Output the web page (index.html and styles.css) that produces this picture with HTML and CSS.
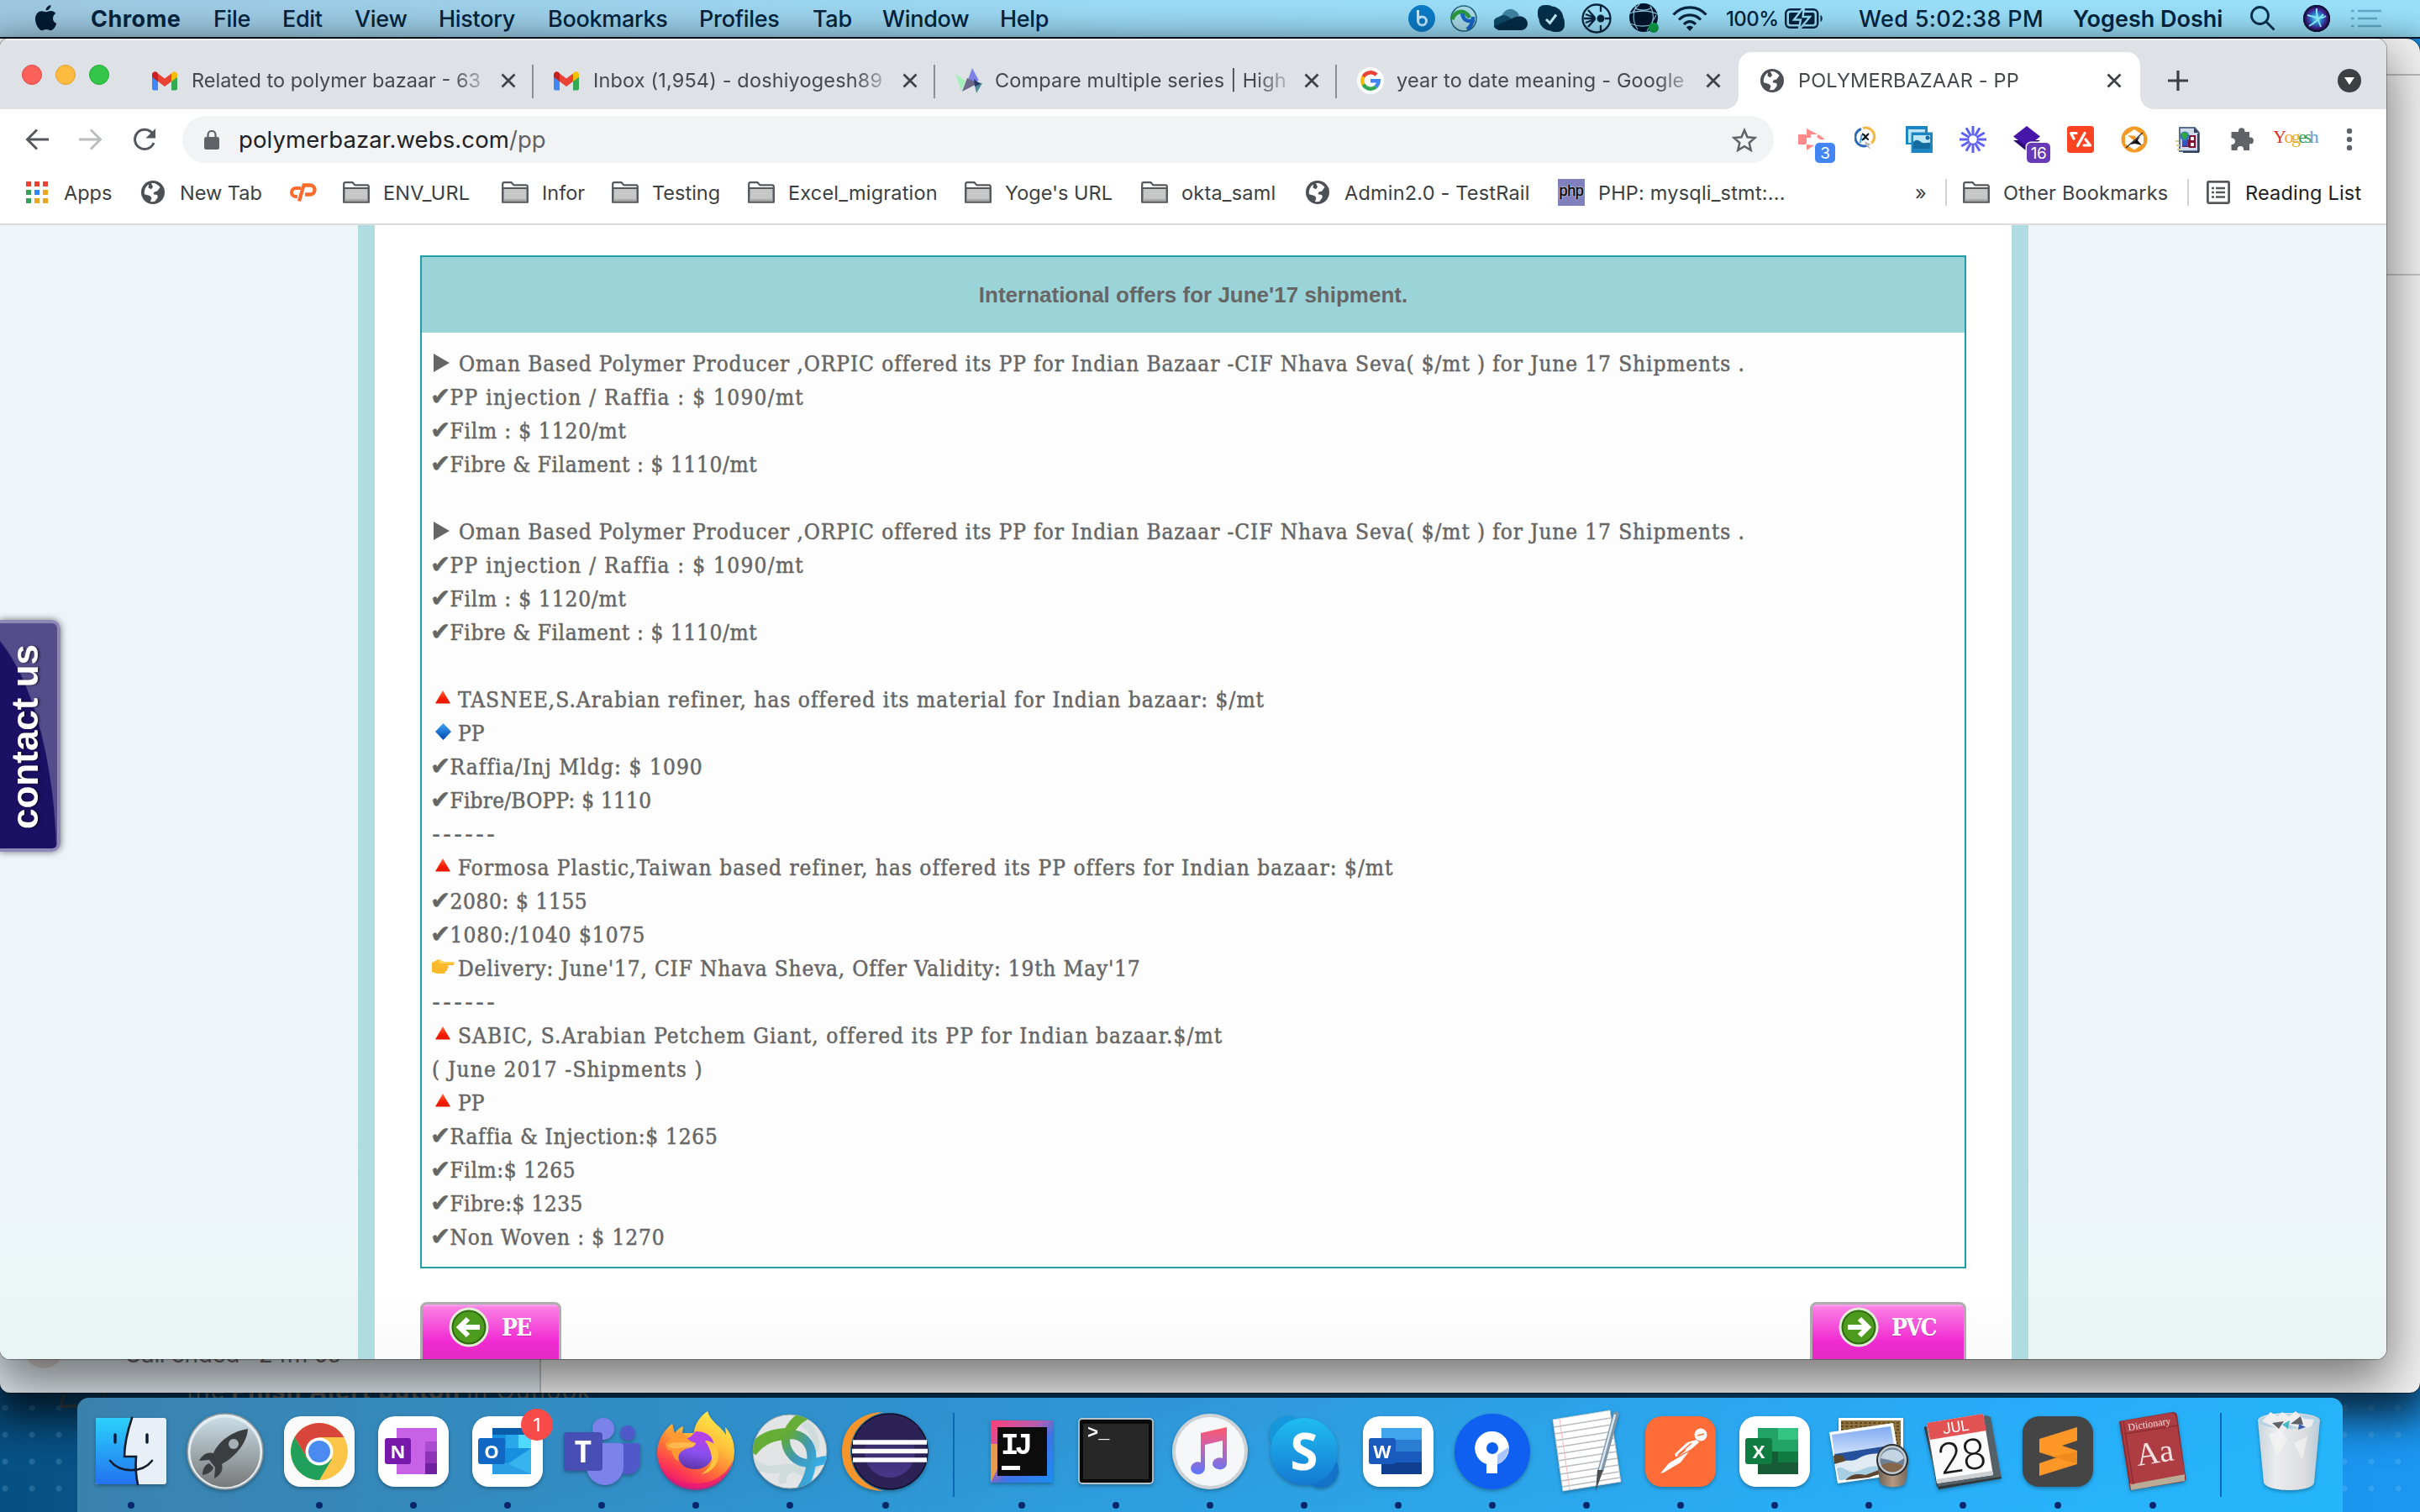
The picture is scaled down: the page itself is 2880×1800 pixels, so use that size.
FILE: index.html
```html
<!DOCTYPE html>
<html lang="en">
<head>
<meta charset="utf-8">
<title>POLYMERBAZAAR - PP</title>
<link rel="stylesheet" href="styles.css">
</head>
<body>
<svg class="defs" aria-hidden="true">
  <defs>
    <symbol id="folder" viewBox="0 0 32 26"><path d="M1.2 24.5V3.2C1.2 2 2 1.2 3 1.2h8.5l3 3.2H29c1 0 1.8.8 1.8 1.8v18.3z" fill="#fff" stroke="#55585c" stroke-width="2.2"/><path d="M1.5 8h29v16.6h-29z" fill="#c7c7c7" stroke="#55585c" stroke-width="2"/><path d="M2.5 21h27v2.6h-27z" fill="#aaa"/></symbol>
    <symbol id="globe" viewBox="0 0 28 28"><circle cx="14" cy="14" r="14" fill="#4d5156"/><path d="M12 3.2c4-.8 8.500 1.400 10.500 4.800l-3.300 4.500-3.700 1-1 2.700 4.700.8.6 3-3.500 4.800c-2 .6-3.500.6-5.300.2l1.500-4.500-2.200-2.500-6.300-1.800C3 12 5.500 6.500 9 4.500l-.5 4 3.500 1.700 2-2.700z" fill="#fff"/></symbol>
    <symbol id="close" viewBox="0 0 18 18"><path d="M1.500 1.500l15 15M16.500 1.500l-15 15" stroke="#3f4246" stroke-width="2.800" fill="none"/></symbol>
    <symbol id="gmail" viewBox="0 0 30 23"><path d="M0 3v17.500A2 2 0 0 0 2 22.500h5V9z" fill="#4285f4"/><path d="M30 3v17.500a2 2 0 0 1-2 2h-5V9z" fill="#34a853"/><path d="M23 2.500V12l7-5.300V3.500C30 .5 26.500-.8 24.200.9z" fill="#fbbc04"/><path d="M7 12V2.500l8 6 8-6V12l-8 6z" fill="#ea4335"/><path d="M0 3.500v3.200L7 12V2.500L5.800.9C3.500-.8 0 .5 0 3.500z" fill="#c5221f"/></symbol>
    <linearGradient id="gRed" x1="0" y1="0" x2="0" y2="1"><stop offset="0" stop-color="#ff6a4a"/><stop offset=".6" stop-color="#f81c00"/><stop offset="1" stop-color="#e01800"/></linearGradient>
    <linearGradient id="gBlue" x1="0" y1="0" x2="0" y2="1"><stop offset="0" stop-color="#3fa4f5"/><stop offset="1" stop-color="#0048b0"/></linearGradient>
    <linearGradient id="gFinder" x1="0" y1="0" x2="0" y2="1"><stop offset="0" stop-color="#2bd2fb"/><stop offset="1" stop-color="#2272f0"/></linearGradient>
    <linearGradient id="gSilver" x1="0" y1="0" x2="0" y2="1"><stop offset="0" stop-color="#c9dde6"/><stop offset="1" stop-color="#787878"/></linearGradient>
    <linearGradient id="gFox" x1=".8" y1="0" x2=".25" y2="1"><stop offset="0" stop-color="#fff14d"/><stop offset=".35" stop-color="#ffc03a"/><stop offset=".6" stop-color="#ff7a35"/><stop offset=".8" stop-color="#ff3d50"/><stop offset="1" stop-color="#e3107a"/></linearGradient>
    <linearGradient id="gFoxBall" x1=".6" y1="0" x2=".4" y2="1"><stop offset="0" stop-color="#bb3fe6"/><stop offset=".5" stop-color="#8a50f0"/><stop offset="1" stop-color="#5f36a8"/></linearGradient>
    <linearGradient id="gLink" x1="0" y1="0" x2="1" y2="1"><stop offset="0" stop-color="#62aa35"/><stop offset=".55" stop-color="#3f98b8"/><stop offset="1" stop-color="#33b4f2"/></linearGradient>
    <linearGradient id="gLens" x1="0" y1="0" x2="0" y2="1"><stop offset="0" stop-color="#2f2560"/><stop offset="1" stop-color="#473889"/></linearGradient>
    <linearGradient id="gNote" x1="0" y1="0" x2="0" y2="1"><stop offset="0" stop-color="#ff5768"/><stop offset=".35" stop-color="#d361a8"/><stop offset="1" stop-color="#5a78fa"/></linearGradient>
    <linearGradient id="gSkype" x1="0" y1="0" x2="0" y2="1"><stop offset="0" stop-color="#1fbdf0"/><stop offset="1" stop-color="#1579d3"/></linearGradient>
    <linearGradient id="gIJ" x1="0" y1="0" x2="1" y2="1"><stop offset="0" stop-color="#ff3f78"/><stop offset=".4" stop-color="#b65cae"/><stop offset=".6" stop-color="#3f73e6"/><stop offset="1" stop-color="#1b8df5"/></linearGradient>
    <linearGradient id="gSky" x1="0" y1="0" x2="0" y2="1"><stop offset="0" stop-color="#7faaf3"/><stop offset="1" stop-color="#cfe0fb"/></linearGradient>
    <linearGradient id="gBarrel" x1="0" y1="0" x2="1" y2="0"><stop offset="0" stop-color="#6b5d52"/><stop offset=".5" stop-color="#b59a84"/><stop offset="1" stop-color="#76665a"/></linearGradient>
    <linearGradient id="gBin" x1="0" y1="0" x2="1" y2="0"><stop offset="0" stop-color="#c9d6dd"/><stop offset=".3" stop-color="#ececee"/><stop offset=".75" stop-color="#dcdddf"/><stop offset="1" stop-color="#b7cbd8"/></linearGradient>
    <radialGradient id="gSiri"><stop offset="0" stop-color="#7fe9ff"/><stop offset=".4" stop-color="#2a86d8"/><stop offset=".75" stop-color="#43218f"/><stop offset="1" stop-color="#0d1238"/></radialGradient>
    <clipPath id="ball"><circle r="44"/></clipPath>
    <clipPath id="net"><circle cx="18" cy="17" r="17"/></clipPath>
  </defs>
</svg>

<header class="menubar">
  <nav class="menus">
    <svg width="28" height="32" viewBox="0 0 28 32"><path d="M19.500 0c.3 3-2.600 6.600-5.900 6.500C13.200 3.500 16.400.3 19.500 0zM14 8.200c1.200 0 3-1.300 5.500-1.200 2.400.1 4.500 1.200 5.800 3.100-5 3.200-4.100 10 1 12-1 3-3.800 8.200-6.900 8.200-2 0-2.800-1.200-5.200-1.200S10.900 30.300 9 30.300C5.400 30.300 1 22.800 1 16.800c0-6.200 3.900-9.500 7.600-9.500 2.300 0 4.100.9 5.400.9z" fill="#001c33"/></svg>
    <b>Chrome</b><span>File</span><span>Edit</span><span>View</span><span>History</span><span>Bookmarks</span><span>Profiles</span><span>Tab</span><span>Window</span><span>Help</span>
  </nav>
  <div class="status">
    <svg width="32" height="32" viewBox="0 0 32 32"><circle cx="16" cy="16" r="16" fill="#0b7cc8"/><path d="M11.500 6v13a5 5 0 1 0 5-5c-2.500 0-4.500 1.500-5 4" fill="none" stroke="#bfeaff" stroke-width="3"/></svg>
    <svg width="32" height="32" viewBox="0 0 32 32"><circle cx="16" cy="16" r="15" fill="#a9dbe8" stroke="#23607b" stroke-width="1.500"/><path d="M2 17C6 7 16 4 23 15" fill="none" stroke="#2b9a3f" stroke-width="5"/><path d="M14 10c2 10 8 10 15 8M27 14c0 7-3 12-7 15" fill="none" stroke="#1766c8" stroke-width="4.500"/></svg>
    <svg width="40" height="27" viewBox="0 0 40 27"><path d="M9 12C10 3 22-4 30 9l-9 7z" fill="#3f84a4"/><path d="M8 27A8 8 0 0 1 6 11c6-4 11-1 15 3l13 11c-1 1-2 2-4 2z" fill="#0d4a68"/><path d="M8 27c-3 0-6-2-7-5l25-11c8-3 14 3 14 8 0 4-3 8-8 8z" fill="#042d47"/></svg>
    <svg width="32" height="32" viewBox="0 0 32 32"><circle cx="16" cy="16" r="14.500" fill="#03304b"/><rect width="20" height="20" rx="8" fill="#03304b"/><rect x="12" y="12" width="20" height="20" rx="8" fill="#03304b"/><path d="M10 17l4.500 4.500L22 11.500" fill="none" stroke="#c9f0ff" stroke-width="3"/></svg>
    <svg width="36" height="36" viewBox="0 0 36 36"><g fill="none" stroke="#03263d" stroke-width="2.300"><circle cx="18" cy="18" r="16.500"/><path d="M23 2v8M23 26v8M28 18h6M3 18h14M8 8l8 9M8 28l8-9M5 13l11 4M5 23l11-4"/></g><circle cx="23" cy="18" r="4.500" fill="#03263d"/></svg>
    <svg width="36" height="36" viewBox="0 0 36 36"><circle cx="18" cy="17" r="17" fill="#00152c"/><g clip-path="url(#net)" fill="none" stroke="#8fcfe8" stroke-width="1.100"><path d="M9 3c-4 9-4 19 2 28M26 3c5 9 4 19-1 28M1 12c10-4 24-4 34 1M2 24c9 4 20 4 30 0M8 6c6 3 14 3 20-1M14 0L5 10M22 33L33 14"/></g><circle cx="30" cy="29" r="6" fill="#0aa04a"/></svg>
    <svg width="42" height="30" viewBox="0 0 42 30"><g fill="none" stroke="#00253f" stroke-width="3.200"><path d="M1.500 10.500C12-1 30-1 40.500 10.500M8 16.500c7-7.500 19-7.500 26 0M14 22c4-4.500 10-4.500 14 0"/></g><path d="M17 25.500c2-2.500 6-2.500 8 0L21 30z" fill="#00253f"/></svg>
    <span class="percent">100%</span>
    <svg width="46" height="26" viewBox="0 0 46 26"><rect x="1.200" y="2.200" width="38" height="21.600" rx="5" fill="none" stroke="#00253f" stroke-width="2.400"/><rect x="5" y="6" width="30.500" height="14" rx="2" fill="#00253f"/><path d="M23-1L11 14.500h8L16.500 27 30 11h-8.500z" fill="#00253f" stroke="#9be0fa" stroke-width="2.400"/><path d="M42.500 9c3 1 3 7 0 8z" fill="#00253f"/></svg>
    <span class="clock">Wed 5:02:38 PM</span>
    <span class="user">Yogesh Doshi</span>
    <svg width="30" height="30" viewBox="0 0 30 30"><g fill="none" stroke="#00304c" stroke-width="2.800"><circle cx="11.500" cy="11.500" r="10"/><path d="M18.500 18.500L28.500 28.500"/></g></svg>
    <svg width="32" height="32" viewBox="0 0 32 32"><circle cx="16" cy="16" r="15.500" fill="url(#gSiri)" stroke="#0b1030" stroke-width="1.500"/><path d="M5 12c8 2 16 6 22 1M16 4c-1 9 2 14 5 22M7 25c5-3 12-8 17-14" stroke="#8df3ff" stroke-width="2" fill="none"/></svg>
    <svg width="36" height="22" viewBox="0 0 36 22"><g stroke="#5cacca" stroke-width="2.600"><path d="M0 2h3.500M8 2h28M0 11h3.500M8 11h23M0 20h3.500M8 20h28"/></g></svg>
  </div>
</header>

<div class="back-note"><svg width="60" height="40" viewBox="0 0 60 40"><path d="M4 22L0 36h56M52 20v10" fill="none" stroke="#4b5358" stroke-width="3"/></svg>the <b>Phish Alert button</b> in Outlook</div>
<div class="back-window">
  <div class="back-bar"></div>
  <div class="back-tools"></div>
  <div class="back-body"><div class="back-list"><i></i><span>Call ended · 24m 0s</span></div></div>
</div>

<main class="window">
  <div class="tabstrip">
    <div class="lights"><i class="red"></i><i class="amber"></i><i class="green"></i></div>
    <div class="tab"><svg width="30" height="23"><use href="#gmail"/></svg><span>Related to polymer bazaar - 63</span><svg class="x" width="18" height="18"><use href="#close"/></svg></div>
    <div class="tab"><svg width="30" height="23"><use href="#gmail"/></svg><span class="roomy">Inbox (1,954) - doshiyogesh89</span><svg class="x" width="18" height="18"><use href="#close"/></svg></div>
    <div class="tab"><svg width="32" height="30" viewBox="0 0 32 30"><path d="M0 7l12 8-5 12z" fill="#a4efb9"/><path d="M20 0l8 15-14 2z" fill="#7d83e6"/><path d="M32 18l-7 12-3-14z" fill="#4e8a98"/><path d="M14 12l13 6-19 10z" fill="#6c6a86"/><path d="M22 13l8 6-7 3z" fill="#283a67"/></svg><span class="roomy">Compare multiple series | High</span><svg class="x" width="18" height="18"><use href="#close"/></svg></div>
    <div class="tab last"><svg width="32" height="32" viewBox="0 0 32 32"><circle cx="16" cy="16" r="16" fill="#fff"/><g fill="none" stroke-width="4.500"><path d="M7.500 11.500A9.700 9.700 0 0 1 23 9.300" stroke="#ea4335"/><path d="M7.600 20.700a9.700 9.700 0 0 1 0-9.400" stroke="#fbbc05"/><path d="M22.500 23.200a9.700 9.700 0 0 1-15-2.700" stroke="#34a853"/><path d="M16 16.300h9.700a9.700 9.700 0 0 1-3.300 7" stroke="#4285f4"/></g></svg><span class="roomy">year to date meaning - Google</span><svg class="x" width="18" height="18"><use href="#close"/></svg></div>
    <div class="tab active"><svg width="28" height="28"><use href="#globe"/></svg><span>POLYMERBAZAAR - PP</span><svg class="x" width="18" height="18"><use href="#close"/></svg></div>
    <svg class="plus" width="24" height="24" viewBox="0 0 24 24"><path d="M12 0v24M0 12h24" stroke="#3c4043" stroke-width="3.200"/></svg>
    <svg class="more" width="28" height="28" viewBox="0 0 28 28"><circle cx="14" cy="14" r="14" fill="#3c4043"/><path d="M8 10h12l-6 9z" fill="#fff"/></svg>
  </div>

  <div class="toolbar">
    <svg class="nav" width="28" height="26" viewBox="0 0 28 26"><path d="M28 13H2.500M14 1.500L2.500 13 14 24.500" fill="none" stroke="#54575c" stroke-width="2.900"/></svg>
    <svg class="nav" width="28" height="26" viewBox="0 0 28 26"><path d="M0 13h25M14 1.500L25.500 13 14 24.500" fill="none" stroke="#babcbe" stroke-width="2.900"/></svg>
    <svg class="nav" width="28" height="28" viewBox="0 0 28 28"><path d="M23.500 7A11.600 11.600 0 1 0 25 18" fill="none" stroke="#54575c" stroke-width="3"/><path d="M27 1v11.500H15.500z" fill="#54575c"/></svg>
    <div class="omnibox">
      <svg width="18" height="23" viewBox="0 0 18 23"><rect y="8" width="18" height="15" rx="2.500" fill="#5f6368"/><path d="M4.500 9V5.500a4.500 4.500 0 0 1 9 0V9" fill="none" stroke="#5f6368" stroke-width="2.200"/></svg>
      <span>polymerbazar.webs.com<em>/pp</em></span>
      <svg width="30" height="29" viewBox="0 0 30 29"><path d="M15 3l3.500 8.300 9 .8-6.800 5.900 2 8.800L15 22.200l-7.700 4.600 2-8.800L2.500 12.100l9-.8z" fill="none" stroke="#5f6368" stroke-width="2.500"/></svg>
    </div>
    <div class="extensions">
      <div class="ext"><svg width="32" height="32" viewBox="0 0 32 32"><path d="M0 10h9v12H0zM10 3l13 7H10zM10 22l9 1-9 6zM24 10l8 6h-6l-4-3zM10 10h5v4h-5z" fill="#ff8a8a"/><path d="M9.500 11v10" stroke="#ff8a8a" stroke-width="1"/></svg><span class="badge blue">3</span></div>
      <div class="ext"><svg class="pxicon" width="26" height="30" viewBox="0 0 26 30"><circle cx="12.500" cy="13" r="10.500" fill="#fff"/><path d="M8 3.500a10.500 10.500 0 1 0 7.500 19.600" fill="none" stroke="#2f6cb8" stroke-width="3"/><path d="M10 2.500A10.500 10.500 0 0 1 20 20.500" fill="none" stroke="#f5b845" stroke-width="3.200"/><text x="6" y="17" font-family="Liberation Sans" font-style="italic" font-weight="700" font-size="13" fill="#37a0d8">p</text><path d="M9 9.500c3-1 5 7 8 6.500M17 9l-8 8" stroke="#111" stroke-width="2" fill="none"/><path d="M12 18l8 4-3 1 2 5-5-4z" fill="#b9b9b9"/></svg></div>
      <div class="ext"><svg width="32" height="32" viewBox="0 0 32 32"><path d="M0 0h26v22H0z" fill="#1a86c4"/><path d="M3 4h20v16H3z" fill="#c4e4f3"/><path d="M6.500 7.500H32V32H6.500z" fill="#1b86c2"/><path d="M9 11h20v14H9z" fill="#bfe7f8"/><path d="M9 19c5-5 8 0 11 1s6-1 9 0v7H9z" fill="#136ba0"/><circle cx="26" cy="14" r="2.500" fill="#136ba0"/></svg></div>
      <div class="ext"><svg width="32" height="32" viewBox="-16 -16 32 32"><g stroke="#5f61f2" stroke-width="3"><path d="M0-16V16M-16 0H16M-8-13.800L8 13.800M8-13.800L-8 13.800M-13.800-8L13.800 8M13.800-8L-13.800 8"/></g><circle r="4.800" fill="#fff"/></svg></div>
      <div class="ext"><svg width="32" height="32" viewBox="0 0 32 32"><path d="M0 17h32L16 30z" fill="#2a0a70"/><path d="M16 0l16 12.500L16 25 0 12.500z" fill="#4716a8"/></svg><span class="badge violet">16</span></div>
      <div class="ext"><svg width="32" height="32" viewBox="0 0 32 32"><rect width="32" height="32" rx="3.500" fill="#fd4422"/><path d="M11 8.500H4.500L8 15M21 8.500l-8.500 15M22 16l5.500 7H20" fill="none" stroke="#fff" stroke-width="3.200" stroke-linejoin="round" stroke-linecap="round"/></svg></div>
      <div class="ext"><svg width="32" height="32" viewBox="0 0 32 32"><circle cx="16" cy="16" r="15.500" fill="#f49a26"/><path d="M16 4l11 7.500v9L16 28.500 5 21v-9.500z" fill="#fff"/><path d="M8 11l10 1-2 6z" fill="#f49a26"/><path d="M23 12L11 22l6-1 8 2-5-6z" fill="#111"/><path d="M26 8L6 26" stroke="#222" stroke-width="1.200"/></svg></div>
      <div class="ext"><svg width="30" height="32" viewBox="0 0 30 32"><path d="M5 2h18l5 6v22H5z" fill="#cfdaea" stroke="#5b6f90" stroke-width="2"/><path d="M22 2v6h6z" fill="#33415c"/><path d="M27 9v22H9" stroke="#32415e" stroke-width="2" fill="none"/><path d="M9 17h6v7H9zM17 12h6v6h-6zM17 19h6v6h-6z" fill="#fff" stroke="#7d1434" stroke-width="2.200"/><path d="M8 17h7v7H8z" fill="#3452c0"/><circle cx="11" cy="12" r="5.500" fill="#2f78c8"/><path d="M7 9c3-3 6-2 8 1l-3 6-4-2z" fill="#32a53a"/><path d="M0 18h4M1 23h4M2 28h4" stroke="#d9cf8a" stroke-width="2"/></svg></div>
      <div class="ext"><svg width="30" height="30" viewBox="0 0 30 30"><path d="M11 5a3.700 3.700 0 0 1 7.400 0v1H24v6.500h1a3.900 3.900 0 0 1 0 7.800h-1V28h-7v-1.200a3.700 3.700 0 0 0-7.400 0V28H2.500v-7h1.300a3.800 3.800 0 0 0 0-7.500H2.500V6H11z" fill="#5f6368"/></svg></div>
      <div class="ext avatar"><span class="r">Y</span><span class="y">o</span><span class="o">g</span><span class="g">e</span><span class="g">s</span><span class="b">h</span></div>
      <div class="ext"><svg width="8" height="28" viewBox="0 0 8 28"><g fill="#5f6368"><circle cx="4" cy="4" r="3.200"/><circle cx="4" cy="14" r="3.200"/><circle cx="4" cy="24" r="3.200"/></g></svg></div>
    </div>
  </div>

  <div class="bookmarks">
    <div class="bm"><svg width="26" height="26" viewBox="0 0 26 26"><path d="M0 0h6v6H0zM10 0h6v6h-6zM20 0h6v6h-6z" fill="#ea4335"/><path d="M0 10h6v6H0zM0 20h6v6H0z" fill="#34a05a"/><path d="M10 10h6v6h-6z" fill="#2d86f5"/><path d="M20 10h6v6h-6zM10 20h6v6h-6zM20 20h6v6h-6z" fill="#eba51f"/></svg><span class="wide">Apps</span></div>
    <div class="bm"><svg width="28" height="28"><use href="#globe"/></svg><span class="mid">New Tab</span></div>
    <div class="bm"><svg width="33" height="23" viewBox="0 0 33 23"><path d="M14 6H8a5 5 0 0 0 0 10h2" fill="none" stroke="#ff6c2c" stroke-width="4"/><path d="M12 21.500L17.500 2.500H25a5.500 5.500 0 0 1 0 11h-6" fill="none" stroke="#ff6c2c" stroke-width="4.300"/></svg></div>
    <div class="bm"><svg width="32" height="26"><use href="#folder"/></svg><span class="loose">ENV_URL</span></div>
    <div class="bm"><svg width="32" height="26"><use href="#folder"/></svg><span>Infor</span></div>
    <div class="bm"><svg width="32" height="26"><use href="#folder"/></svg><span>Testing</span></div>
    <div class="bm"><svg width="32" height="26"><use href="#folder"/></svg><span class="loose">Excel_migration</span></div>
    <div class="bm"><svg width="32" height="26"><use href="#folder"/></svg><span>Yoge's URL</span></div>
    <div class="bm"><svg width="32" height="26"><use href="#folder"/></svg><span class="loose">okta_saml</span></div>
    <div class="bm"><svg width="28" height="28"><use href="#globe"/></svg><span class="mid loose">Admin2.0 - TestRail</span></div>
    <div class="bm"><div class="php">php</div><span class="loose">PHP: mysqli_stmt:...</span></div>
    <div class="bm chevrons">»</div>
    <div class="bm rule"></div>
    <div class="bm"><svg width="32" height="26"><use href="#folder"/></svg><span class="loose">Other Bookmarks</span></div>
    <div class="bm rule"></div>
    <div class="bm reading"><svg width="28" height="28" viewBox="0 0 28 28"><rect x="1.400" y="1.400" width="25.200" height="25.200" rx="1" fill="#fff" stroke="#55595e" stroke-width="2.800"/><path d="M6 9h3M11 9h11M6 14h3M11 14h11M6 19.500h3M11 19.500h11" stroke="#55595e" stroke-width="2.600"/></svg><span class="mid loose">Reading List</span></div>
  </div>

  <div class="page">
    <div class="column">
      <section class="offers">
        <h2>International offers for June'17 shipment.</h2>
        <div class="lines">
          <p class="s9"><svg class="play" viewBox="0 0 19 22"><path d="M0 0l19 11L0 22z" fill="#666"/></svg>Oman Based Polymer Producer ,ORPIC offered its PP for Indian Bazaar -CIF Nhava Seva( $/mt ) for June 17 Shipments .</p>
          <p class="s13"><i>✔</i>PP injection / Raffia : $ 1090/mt</p>
          <p class="s8"><i>✔</i>Film : $ 1120/mt</p>
          <p class="s6"><i>✔</i>Fibre &amp; Filament : $ 1110/mt</p>
          <p>&nbsp;</p>
          <p class="s9"><svg class="play" viewBox="0 0 19 22"><path d="M0 0l19 11L0 22z" fill="#666"/></svg>Oman Based Polymer Producer ,ORPIC offered its PP for Indian Bazaar -CIF Nhava Seva( $/mt ) for June 17 Shipments .</p>
          <p class="s13"><i>✔</i>PP injection / Raffia : $ 1090/mt</p>
          <p class="s8"><i>✔</i>Film : $ 1120/mt</p>
          <p class="s6"><i>✔</i>Fibre &amp; Filament : $ 1110/mt</p>
          <p>&nbsp;</p>
          <p class="s10"><svg class="emoji" viewBox="0 0 31 20"><path d="M13 1l9 15.500H4z" fill="url(#gRed)"/></svg>TASNEE,S.Arabian refiner, has offered its material for Indian bazaar: $/mt</p>
          <p><svg class="emoji" viewBox="0 0 31 20"><path d="M13.500 0l9.500 10-9.500 10L4 10z" fill="url(#gBlue)"/></svg>PP</p>
          <p class="s11"><i>✔</i>Raffia/Inj Mldg: $ 1090</p>
          <p class="s2"><i>✔</i>Fibre/BOPP: $ 1110</p>
          <p class="dash">------</p>
          <p class="s10"><svg class="emoji" viewBox="0 0 31 20"><path d="M13 1l9 15.500H4z" fill="url(#gRed)"/></svg>Formosa Plastic,Taiwan based refiner, has offered its PP offers for Indian bazaar: $/mt</p>
          <p class="s6"><i>✔</i>2080: $ 1155</p>
          <p class="s10"><i>✔</i>1080:/1040 $1075</p>
          <p class="s8"><svg class="emoji" viewBox="0 0 31 20"><path d="M0 5l8-4 6 3h11c2 0 2 4 0 4h-7c3 1 2 4 0 4 1 2 0 3-2 3.500 0 2-1 2.500-3 2.500H6l-6-2z" fill="#fbb92b"/><path d="M8 1l6 3h11c1 0 1.500 1 1.500 1.700L9 6z" fill="#ffd35c"/></svg>Delivery: June'17, CIF Nhava Sheva, Offer Validity: 19th May'17</p>
          <p class="dash">------</p>
          <p class="s11"><svg class="emoji" viewBox="0 0 31 20"><path d="M13 1l9 15.500H4z" fill="url(#gRed)"/></svg>SABIC, S.Arabian Petchem Giant, offered its PP for Indian bazaar.$/mt</p>
          <p class="s12">( June 2017 -Shipments )</p>
          <p><svg class="emoji" viewBox="0 0 31 20"><path d="M13 1l9 15.500H4z" fill="url(#gRed)"/></svg>PP</p>
          <p class="s7"><i>✔</i>Raffia &amp; Injection:$ 1265</p>
          <p class="s6"><i>✔</i>Film:$ 1265</p>
          <p class="s4"><i>✔</i>Fibre:$ 1235</p>
          <p class="s9"><i>✔</i>Non Woven : $ 1270</p>
        </div>
      </section>
      <div class="pager">
        <a class="pink pe"><svg width="48" height="48" viewBox="-24 -24 48 48"><circle r="23.500" fill="#dfeed5"/><circle r="19.500" fill="#4c9a1e" stroke="#2f6a10" stroke-width="2"/><path d="M13 0H-8M-1-10L-11 0-1 10" fill="none" stroke="#fff" stroke-width="6"/></svg><span>PE</span></a>
        <a class="pink pvc"><svg width="48" height="48" viewBox="-24 -24 48 48"><circle r="23.500" fill="#dfeed5"/><circle r="19.500" fill="#4c9a1e" stroke="#2f6a10" stroke-width="2"/><path d="M-13 0H8M1-10L11 0 1 10" fill="none" stroke="#fff" stroke-width="6"/></svg><span>PVC</span></a>
      </div>
    </div>
    <div class="contact"><span>contact us</span></div>
  </div>
</main>

<footer class="dock">
  <div class="app on"><svg viewBox="-48 -48 96 96"><rect x="-42" y="-40" width="84" height="79" rx="3" fill="#e8eff6"/><path d="M1-40C-5-22-8-8-8 6H6C5 18 6 30 8 39h-47a3 3 0 0 1-3-3v-73a3 3 0 0 1 3-3z" fill="url(#gFinder)"/><path d="M-19-20v9M19-20v9" stroke="#0b1930" stroke-width="3.400" stroke-linecap="round"/><path d="M1-40C-5-22-8-8-8 6H6C5 18 6 30 8 39M-25 11c12 15 38 15 50 0" fill="none" stroke="#101b2c" stroke-width="2.600" stroke-linecap="round"/></svg></div>
  <div class="app"><svg viewBox="-48 -48 96 96"><circle r="45" fill="#e3edf1"/><circle r="41.500" fill="url(#gSilver)" cy="1"/><circle r="45" fill="none" stroke="#8f989c" stroke-width="1.500"/><path d="M27-27C8-24-8-12-14 2c-8-2-13 2-17 9l12-1 7 9-1 13c7-4 11-9 9-17C9 8 26-8 27-27z" fill="#3b3e41"/><circle cx="10" cy="-9" r="6" fill="#a5b0b5"/><path d="M-19 14c-6 2-8 8-8 14 6-1 12-4 13-9z" fill="#3b3e41"/></svg></div>
  <div class="app on"><svg viewBox="-48 -48 96 96"><rect x="-42" y="-42" width="84" height="84" rx="20" fill="#fafafa"/><circle r="34" fill="#fbc548"/><path d="M-29.400-17A34 34 0 0 1 29.400-17H0L-14 9z" fill="#d8453a"/><path d="M-29.400-17A34 34 0 0 0 0 34L15 9-14 9z" fill="#21a05c"/><circle r="16.500" fill="#fff"/><circle r="13" fill="#4b8af0"/></svg></div>
  <div class="app on"><svg viewBox="-48 -48 96 96"><rect x="-42" y="-42" width="84" height="84" rx="20" fill="#fff"/><path d="M-20-28h48v55h-48z" fill="#c762e6"/><path d="M14-12h14V0H14z" fill="#ab4cd0"/><path d="M14 0h14v14H14z" fill="#8f34b8"/><path d="M14 14h14v13H14z" fill="#7220a2"/><rect x="-34" y="-16" width="31" height="31" rx="3" fill="#7719aa"/><text x="-18.500" y="8" class="glyph" font-size="22">N</text></svg></div>
  <div class="app on"><svg viewBox="-48 -48 96 96"><rect x="-42" y="-42" width="84" height="84" rx="20" fill="#fff"/><path d="M-18-28h46v55h-46z" fill="#1490df"/><path d="M-18-28h46v8h-46z" fill="#0a5da8"/><path d="M-2-20h15v16H-2z" fill="#28a8ea"/><path d="M13-20h15v16H13z" fill="#50d9ff"/><path d="M-18 27L28-4v31z" fill="#35b4ee"/><path d="M-18 6l46 21h-46z" fill="#2b9fe6"/><rect x="-35" y="-16" width="32" height="31" rx="3" fill="#1068c4"/><text x="-19" y="8" class="glyph" font-size="22">O</text></svg><span class="count">1</span></div>
  <div class="app on"><svg viewBox="-48 -48 96 96"><circle cx="2" cy="-27" r="13" fill="#7b83eb"/><circle cx="31" cy="-22" r="9" fill="#5059c9"/><path d="M14-10h28a4 4 0 0 1 4 4v18c0 10-9 17-20 15z" fill="#5059c9"/><path d="M-18-10h40a4 4 0 0 1 4 4v24a22 22 0 0 1-44 0z" fill="#7b83eb"/><rect x="-45" y="-23" width="46" height="46" rx="4" fill="#484fb4"/><text x="-22" y="13" class="glyph" font-size="35">T</text></svg></div>
  <div class="app on"><svg viewBox="-48 -48 96 96"><path d="M14-48C8-44-2-34-2-22H-16l1-8c-5 2-9 6-10 9l-3-12C-39-25-46-12-46 2A46 43 0 0 0 46 0c0-11-4-22-11-29l1 9C31-29 17-36 14-48z" fill="url(#gFox)"/><path d="M-44 12c6 22 24 26 44 26S38 28 44 10C40 32 22 46 0 46S-40 32-44 12z" fill="#e6147a" opacity=".7"/><path d="M0-24c9 0 16 3 20 10C24-5 22 21 0 21S-22 4-20-3z" fill="url(#gFoxBall)"/><circle cy="1" r="19.500" fill="url(#gFoxBall)"/><path d="M-28-33l3 12c6-4 10-2 13 3 4 6 8 6 12 8-2 7-10 5-14 8-6 3-8 8-6 14-6-4-8-8-9-13-5 0-6-4-7-8l5-6z" fill="#ff9a33"/><path d="M-34-8c8-4 22-3 34-2-2 7-8 4-18 6-8 1-14 0-16-4z" fill="#ffb84d"/><path d="M11-13c10 0 16 8 16 18 0 12-10 20-20 22 8-6 13-12 12-20-1-8-4-14-8-20z" fill="#ffc33d"/></svg></div>
  <div class="app on"><svg viewBox="-48 -48 96 96"><circle r="44" fill="#e3e4e5" stroke="#8fa3ad"/><g clip-path="url(#ball)" fill="none"><path d="M-44 12c20 18 34 4 48 8s14 12 34-10M-8 38c-4-14 10-20 24-20M16-34c14 8 16 22 14 34" stroke="#cfdcdb" stroke-width="9"/><path d="M-46 0C-34-16-20-21 0-21" stroke="#65ad36" stroke-width="14"/><path d="M-2-21C2-32 12-42 24-46" stroke="#65ad36" stroke-width="12"/><path d="M-4-20c-4 14 6 32 24 34 8 1 16-4 26-4" stroke="url(#gLink)" stroke-width="10"/><path d="M-2-20C14-22 26-10 26 6c0 14-4 28-14 42" stroke="url(#gLink)" stroke-width="11"/></g></svg></div>
  <div class="app on wide-app"><svg viewBox="-48 -48 96 96"><path d="M-3-47C-35-46-52-26-52 0s17 46 49 47C-28 40-42 22-42 0s14-40 39-47z" fill="#f7942a"/><circle r="45" cx="5" fill="#2c2255" stroke="#120f2b" stroke-width="1.500"/><circle r="30" cx="5" cy="1" fill="url(#gLens)"/><path d="M-29-32h68v20h-68z" fill="#2c2255"/><path d="M-39-11h88M-40-.5h90M-39 10h88" stroke="#fbfbfd" stroke-width="5.500"/></svg></div>
  <div class="divider"></div>
  <div class="app on"><svg viewBox="-48 -48 96 96"><path d="M-37-37h74v74h-74z" fill="url(#gIJ)"/><path d="M-37-9h9v28l-9 18z" fill="#e89a4c"/><path d="M-29-29h59v58h-59z" fill="#0c0c0c"/><text x="-25" y="3" font-family="Liberation Mono" font-weight="700" font-size="36" fill="#fff" letter-spacing="-5">IJ</text><path d="M-24 17h22v5h-22z" fill="#fff"/></svg></div>
  <div class="app on"><svg viewBox="-48 -48 96 96"><rect x="-44" y="-39" width="88" height="77" rx="4" fill="#0a0a0a" stroke="#b9c4ca" stroke-width="1.800"/><path d="M-39-33h78v66h-78z" fill="#272727"/><text x="-34" y="-16" font-family="Liberation Mono" font-weight="700" font-size="22" fill="#fff">&gt;_</text></svg></div>
  <div class="app on"><svg viewBox="-48 -48 96 96"><circle r="45" fill="#cdd2d6"/><circle r="41" fill="#f5f7f9"/><path d="M-11-22l31-7V14a8.500 7 0 1 1-5-6v-21l-21 5V19a8.500 7.500 0 1 1-5-6z" fill="url(#gNote)"/></svg></div>
  <div class="app on"><svg viewBox="-48 -48 96 96"><circle cx="-19" cy="-20" r="22" fill="#1597dc"/><circle cx="20" cy="22" r="21" fill="#1273c9"/><circle r="40" fill="url(#gSkype)"/><text x="0" y="22" class="glyph" font-size="60">S</text></svg></div>
  <div class="app on"><svg viewBox="-48 -48 96 96"><rect x="-42" y="-42" width="84" height="84" rx="20" fill="#fff"/><path d="M-20-28h48v14h-48z" fill="#41a5ee"/><path d="M-20-14h48V0h-48z" fill="#2b7cd3"/><path d="M-20 0h48v13h-48z" fill="#185abd"/><path d="M-20 13h48v14h-48z" fill="#103f91"/><rect x="-35" y="-16" width="32" height="31" rx="3" fill="#185abd"/><text x="-19" y="8" class="glyph" font-size="22">W</text></svg></div>
  <div class="app on"><svg viewBox="-48 -48 96 96"><circle r="45" fill="#0f5ff0"/><path d="M0-24a20 20 0 0 1 6 39V26H-7V15A20 20 0 0 1 0-24z" fill="#fff"/><path d="M6 15V4L19-5c1 8-5 17-13 20z" fill="#a9c6fb"/><circle cy="-4" r="7" fill="#0f5ff0"/></svg></div>
  <div class="app on"><svg viewBox="-48 -48 96 96"><path d="M-40-38L28-49 41 36-28 47z" fill="#fff" stroke="#ccc" stroke-width=".8"/><path d="M-39-29L29-40M-38-21L30-32M-37-13L32-24M-36-5L33-16M-35 3L34-8M-34 11L36 0M-33 19L37 8M-31 27L38 16M-30 35L39 24M-29 42L40 31" stroke="#b9bcc0" stroke-width="1.500"/><path d="M-32-39l12 84" stroke="#f3b9b9"/><path d="M35-44L17 22" stroke="#7f96a6" stroke-width="7" stroke-linecap="round"/><path d="M34-44L16 22" stroke="#dce8ef" stroke-width="2.500"/><path d="M13 22h7l-9 25z" fill="#4c4f52"/></svg></div>
  <div class="app on"><svg viewBox="-48 -48 96 96"><rect x="-42" y="-42" width="84" height="84" rx="20" fill="#ff6c37"/><circle cx="24" cy="-20" r="7.500" fill="#fff"/><path d="M19-14L8-11l-15 14 2 4 18-10 9-8z" fill="#fff"/><path d="M-4 8l-10 6-10 12 4-1L0 13 10 0z" fill="#fff"/><path d="M-3 4l16-14M20-19l8-2M-5 7L6-2" stroke="#ff6c37" stroke-width="1.600"/></svg></div>
  <div class="app on"><svg viewBox="-48 -48 96 96"><rect x="-42" y="-42" width="84" height="84" rx="20" fill="#fff"/><path d="M-20-28H4V0h-24z" fill="#21a366"/><path d="M4-28h24v14H4z" fill="#33c481"/><path d="M4-14h24V0H4z" fill="#21a366"/><path d="M-20 0h48v27h-48z" fill="#185c37"/><path d="M4 0h24v13H4z" fill="#107c41"/><rect x="-35" y="-16" width="32" height="31" rx="3" fill="#107c41"/><text x="-19" y="8" class="glyph" font-size="22">X</text></svg></div>
  <div class="app on"><svg viewBox="-48 -48 96 96"><path d="M-36-40h77v70h-77z" fill="#fff"/><path d="M-33-37h71v60h-71z" fill="#8f713c"/><path d="M-33-34h71M-33-30h71M-33-26h71M31-22h7M31-18h7M31-14h7M32-10h6M33-6h5" stroke="#4c3a1c" stroke-width="1.500" stroke-dasharray="3 2.500"/><path d="M-47-23L29-34 39 27-37 38z" fill="#fff"/><path d="M-44-20L26-30 30-8-41 3z" fill="url(#gSky)"/><path d="M-41 3L30-8l5 31-70 11z" fill="#24509c"/><path d="M-40 12c12-4 18 2 28-4s20-6 44-6l3 21-70 11z" fill="#dfeaf2"/><path d="M-38 20c8-4 12 6 22 4s14-8 30-6l20 5-1 2-68 9z" fill="#8ec2dd" opacity=".7"/><path d="M-42 5l10-1 5 7-14 4zM-28 34c8-8 16-8 24-6l16-6 3 4-15 5z" fill="#5d4630"/><path d="M10 12h37l-3 25c-4 7-26 7-31 0z" fill="url(#gBarrel)"/><circle cx="28" cy="10" r="19" fill="#2c2f31"/><circle cx="28" cy="10" r="17" fill="#c3c8cc"/><circle cx="28" cy="10" r="14.500" fill="#6c7f94"/><path d="M14 8C18-6 38-6 42 8l-8 5-10-3z" fill="#c3d4e2"/><path d="M15 17c6-5 20-4 26 0-5 9-20 10-26 0z" fill="#86664a"/></svg></div>
  <div class="app on"><svg viewBox="-48 -48 96 96"><path d="M-46-29L28-43l5 2 13 73-75 13z" fill="#566167"/><path d="M-46-29l2-1 13 72 76-12 1 2-75 13z" fill="#2f383c"/><path d="M-43-34L24-45 36 28-31 38z" fill="#fbfbfb"/><path d="M-43-34L24-45 28-25-39-14z" fill="#e35252"/><path d="M-31 33L35 23l1 5-67 10z" fill="#cdd0d2"/><g transform="rotate(-9)"><text x="-4" y="-24" class="cal jul" font-size="18" fill="#fff">JUL</text><text x="-2" y="23" class="cal" font-size="51" fill="#1c1c1c">28</text></g></svg></div>
  <div class="app on sub-app"><svg viewBox="-48 -48 96 96"><rect x="-42" y="-42" width="84" height="84" rx="20" fill="#454545"/><path d="M23-29L-22-15V1L23 15V-1L5-7l18-6z" fill="#ff9727"/><path d="M-22 29L23 15V-1L-4 8l-18 6z" fill="#ff9727"/><path d="M-7 6L23 15V0z" fill="#f08a1e"/></svg></div>
  <div class="app on"><svg viewBox="-48 -48 96 96"><path d="M-40-36L24-47c3 0 4 1 5 4L39 30c1 3 0 5-3 6l-63 10z" fill="#8e2b30"/><path d="M-27 38L38 27v8L-26 46z" fill="#b9ab95"/><path d="M-38-36L22-46c3 0 4 1 5 3L38 27l-64 12z" fill="#ad3d42"/><path d="M-35-36l12 75M-34-21L29-31" stroke="#8e2b30" stroke-width="1.500"/><g transform="rotate(-9)"><text x="1" y="-29" class="book" font-size="12">Dictionary</text><text x="2" y="14" class="book" font-size="38">Aa</text></g></svg></div>
  <div class="divider second"></div>
  <div class="app"><svg viewBox="-48 -48 96 96"><path d="M-37-37c0-12 74-12 74 0L30 37c-2 12-56 12-60 0z" fill="url(#gBin)"/><ellipse cy="-36" rx="36" ry="9" fill="#b9d3e2"/><path d="M-32-36l10-11 9 5 5-5 8 5 8-6 10 9 12 1-3 8-12 3-14-5-8 8-12-6z" fill="#eee"/><path d="M-20-34l14-2-6 9zM2-33l12-9 3 10z" fill="#60646a"/><path d="M-8-32l9-5-2 10z" fill="#3fb8c9"/><path d="M12-33l8 4-9 3z" fill="#3c5fb0"/><path d="M-24-20l14-6 8 12-12 18zM6-10l16-8-6 28z" fill="#f6f6f7" opacity=".6"/></svg></div>
</footer>
</body>
</html>
```
FILE: styles.css
```css
* { box-sizing: border-box; }
body {
  margin: 0;
  width: 2880px;
  height: 1800px;
  overflow: hidden;
  position: relative;
  font-family: Inter, "Liberation Sans", sans-serif;
  background:
    radial-gradient(circle at 6px 6px, rgba(140, 200, 240, .22) 3px, transparent 4px) 0 1670px / 32px 32px,
    linear-gradient(90deg, #075083, #0b66a8 40%, #1489e0 80%, #1b97f2);
}
svg { display: block; flex: none; }
.defs { position: absolute; width: 0; height: 0; }

/* menu bar */
.menubar {
  height: 46px;
  display: flex;
  justify-content: space-between;
  border-bottom: 2px solid #011a2c;
  background: linear-gradient(90deg, #9fc9e1, #9cdcf7 50%, #9ae2fc);
  color: #00253f;
  font-size: 27px;
  white-space: nowrap;
}
.menus {
  display: grid;
  grid-template-columns: 67px 146px 82px 86px 100px 130px 180px 135px 83px 140px 70px;
  align-items: center;
  padding-left: 41px;
  font-weight: 500;
  letter-spacing: -.3px;
}
.menus b { font-weight: 700; letter-spacing: .5px; }
.status {
  display: grid;
  grid-template-columns: 50px 52px 52px 52px 56px 52px 64px 70px 88px 255px 211px 63px 57px 36px;
  align-items: center;
  padding-right: 46px;
  font-weight: 500;
}
.percent { font-size: 24px; letter-spacing: -.6px; }
.clock { letter-spacing: .3px; }
.user { font-weight: 600; letter-spacing: 0; }

/* windows */
.back-window {
  position: absolute;
  left: 0; top: 46px;
  width: 2880px; height: 1612px;
  border-radius: 0 16px 12px 12px;
  overflow: hidden;
  background: #f1f1f1;
  display: flex;
  flex-direction: column;
  outline: 1px solid rgba(0, 0, 0, .4);
  box-shadow: 0 20px 50px 10px rgba(0, 0, 0, .75);
}
.back-bar { height: 44px; border-bottom: 2px solid #bbb; }
.back-tools { height: 238px; border-bottom: 2px solid #c4c4c4; }
.back-body { flex: 1; display: flex; align-items: stretch; }
.back-list {
  width: 644px;
  border-right: 2px solid #bcbcbc;
  background: #dfe6eb;
  display: flex;
  align-items: flex-end;
  padding: 0 0 29px 28px;
  font-size: 28px;
  line-height: 34px;
  color: #666;
  letter-spacing: -.4px;
}
.back-list i { width: 48px; height: 48px; border-radius: 50%; background: #d3cdcb; margin-right: 72px; }
.back-note {
  position: absolute;
  left: 72px; top: 1638px;
  display: flex;
  gap: 7px;
  align-items: flex-start;
  color: #aaa59d;
  font-size: 29px;
  letter-spacing: 1px;
  line-height: 36px;
  white-space: nowrap;
}
.back-note svg { margin-right: 83px; }
.window {
  position: absolute;
  left: 0; top: 46px;
  width: 2840px; height: 1572px;
  border-radius: 10px 12px 12px 12px;
  overflow: hidden;
  background: #fff;
  display: flex;
  flex-direction: column;
  box-shadow: 0 0 0 1px rgba(0, 0, 0, .3);
}
.back-window::after {
  content: "";
  position: absolute;
  left: 0; top: 0;
  width: 2840px; height: 1572px;
  border-radius: 12px;
  box-shadow: 0 24px 60px 4px rgba(0, 0, 0, .5);
}

/* tab strip */
.tabstrip {
  height: 84px;
  background: #dee1e6;
  box-shadow: inset 0 2px 0 #eef0f2;
  display: flex;
  align-items: flex-end;
}
.lights { width: 157px; height: 84px; padding: 31px 0 0 26px; display: flex; gap: 16px; }
.lights i { width: 24px; height: 24px; border-radius: 50%; }
.red { background: #fc605b; border: 1px solid #e2463f; }
.amber { background: #fdbc40; border: 1px solid #e0a12c; }
.green { background: #34c648; border: 1px solid #1fab31; }
.tab {
  position: relative;
  width: 478px;
  height: 68px;
  padding-left: 24px;
  display: grid;
  grid-template-columns: 47px 353px 1fr;
  align-items: center;
  color: #45484c;
  font-size: 23.5px;
  letter-spacing: 0;
}
.tab:not(.last):not(.active) { background: linear-gradient(#8d9197, #8d9197) 476px 15px / 2px 40px no-repeat; }
.tab span {
  white-space: nowrap;
  line-height: 34px;
  -webkit-mask-image: linear-gradient(90deg, #000 310px, transparent 362px);
  mask-image: linear-gradient(90deg, #000 310px, transparent 362px);
}
.tab .roomy { letter-spacing: .15px; }
.tab .x { margin-left: 15px; }
.active { background: #fff; border-radius: 16px 16px 0 0; padding-left: 26px; grid-template-columns: 45px 352px 1fr; letter-spacing: .15px; }
.active::before, .active::after {
  content: "";
  position: absolute;
  bottom: 0;
  width: 16px; height: 16px;
}
.active::before { left: -16px; background: radial-gradient(circle at 0 0, transparent 15.500px, #fff 16px); }
.active::after { right: -16px; background: radial-gradient(circle at 100% 0, transparent 15.500px, #fff 16px); }
.plus { margin: 0 0 22px 33px; }
.more { margin: 0 0 20px 178px; }

/* toolbar */
.toolbar { height: 72px; display: flex; align-items: center; padding-left: 30px; }
.nav { margin-right: 36px; }
.nav:nth-child(3) { margin-right: 31px; }
.omnibox {
  width: 1894px;
  height: 56px;
  border-radius: 28px;
  background: #f1f3f4;
  display: flex;
  align-items: center;
  padding: 0 20px 0 26px;
  font-size: 27.5px;
  color: #202124;
}
.omnibox span { margin-left: 23px; flex: 1; letter-spacing: .1px; }
.omnibox em { font-style: normal; color: #5f6368; }
.extensions { display: flex; margin-left: 13px; }
.ext { position: relative; width: 64px; height: 56px; display: flex; align-items: center; justify-content: center; }
.pxicon { margin-top: -2px; }
.badge {
  position: absolute;
  left: 36px; bottom: 0;
  height: 24px;
  min-width: 24px;
  border-radius: 5px;
  color: #fff;
  font-size: 19px;
  line-height: 26px;
  text-align: center;
}
.blue { background: #4285f4; box-shadow: 0 0 0 1.5px #fff; }
.violet { left: 32px; background: #673ab7; min-width: 28px; letter-spacing: -.5px; box-shadow: 0 0 0 1.5px #fff; }
.avatar { font: 22px "Liberation Serif", serif; letter-spacing: -2.600px; padding: 0 2px 6px 0; }
.r { color: #d93025; } .y { color: #f0a03c; } .o { color: #e0b030; } .g { color: #2f9e58; } .b { color: #5aa0d8; }

/* bookmarks */
.bookmarks {
  height: 66px;
  flex: none;
  padding: 0 0 10px 31px;
  display: grid;
  grid-template-columns: 137px 176px 64px 189px 131px 162px 258px 210px 196px 300px 425px 36px 21px 267px 23px 200px;
  align-items: center;
  border-bottom: 2px solid #d9dbde;
  font-size: 23.5px;
  letter-spacing: 0;
  color: #3c4043;
  white-space: nowrap;
}
.bm { display: flex; align-items: center; }
.bm span { margin-left: 16px; }
.bm .wide { margin-left: 19px; }
.bm .mid { margin-left: 18px; }
.bm .loose { letter-spacing: .2px; }
.php {
  width: 32px; height: 32px;
  background: #8080be;
  color: #000;
  font: 18px/28px "Liberation Sans", sans-serif;
  letter-spacing: -.4px;
  text-align: center;
  -webkit-text-stroke: .5px #000;
  text-shadow: 0 0 2px #fff, 0 0 2px #fff, 0 0 1px #fff;
}
.rule { width: 2px; height: 32px; background: #d0d2d5; }
.reading { color: #202124; }

/* page */
.page {
  flex: 1;
  display: flex;
  position: relative;
  background: linear-gradient(#edf5f8 80%, #eef7f8 92%, #e8f3f4);
}
.column {
  width: 1988px;
  margin-left: 426px;
  border: solid #b0dce1;
  border-width: 0 20px;
  padding: 36px 54px 0;
  background: linear-gradient(#fff 94%, #fafafa);
}
.offers {
  height: 1206px;
  border: 2px solid #229ca5;
  background: #fdfdfd;
  color: #666;
}
.offers h2 {
  margin: 0;
  height: 90px;
  background: #9bd4d8;
  text-align: center;
  font: 700 26px/90px "Liberation Sans", Arial, sans-serif;
}
.lines {
  padding: 17px 0 0 12px;
  font-family: "DejaVu Serif Condensed", "DejaVu Serif", serif;
  font-size: 26px;
  line-height: 40px;
  letter-spacing: .1px;
  -webkit-text-stroke: .5px #666;
}
.lines p { margin: 0; height: 40px; white-space: nowrap; }
.lines i { display: inline-block; width: 21.500px; font: normal 29px/1 "DejaVu Sans", sans-serif; letter-spacing: 0; text-indent: -2px; }
.lines svg { display: inline-block; }
.s2 { letter-spacing: .2px; }
.s4 { letter-spacing: .4px; }
.s6 { letter-spacing: .6px; }
.s7 { letter-spacing: .73px; }
.s8 { letter-spacing: .8px; }
.s9 { letter-spacing: .88px; }
.s10 { letter-spacing: 1.02px; }
.s11 { letter-spacing: 1.09px; }
.s12 { letter-spacing: 1.17px; }
.s13 { letter-spacing: 1.28px; }
.play { width: 19px; height: 22px; margin: 0 11px 0 2px; vertical-align: -1px; }
.emoji { width: 31px; height: 20px; vertical-align: 1px; }
.lines .dash { font-size: 33px; letter-spacing: 3px; -webkit-text-stroke: 0; }

.pager { display: flex; justify-content: space-between; margin-top: 40px; height: 68px; }
.pink {
  height: 110px;
  border: 3px solid #adadad;
  border-radius: 8px;
  background: linear-gradient(#ff9aec 0 2px, #fb7fe4 3px, #f02ad2 44px, #e22bc4 64px);
  color: #fff;
  display: flex;
  align-items: flex-start;
  font: 700 28px/50px "DejaVu Serif Condensed", "DejaVu Serif", serif;
  padding: 3px 0 0 31px;
}
.pe { width: 168px; }
.pvc { width: 186px; }
.pink span { margin-left: 15px; letter-spacing: -2px; text-shadow: 0 1px 1px rgba(0, 0, 0, .2); }
.contact {
  position: absolute;
  left: 0; top: 470px;
  width: 72px; height: 276px;
  border: 4px solid #8f87b8;
  border-left: 0;
  border-radius: 0 10px 10px 0;
  background: radial-gradient(ellipse 120px 300px at -52px 290px, #1c1065 99%, #554d8b 100%);
  box-shadow: 0 0 8px rgba(0, 0, 0, .55);
  display: flex;
  align-items: center;
  color: #fff;
}
.contact span {
  writing-mode: vertical-rl;
  transform: rotate(180deg);
  margin-bottom: 5px;
  font: 700 44px/60px "Liberation Sans", Arial, sans-serif;
  text-shadow: 0 2px 3px rgba(0, 0, 0, .6);
  white-space: nowrap;
  height: 226px;
}

/* dock */
.dock {
  position: absolute;
  left: 92px; bottom: 0;
  width: 2696px; height: 136px;
  border-radius: 14px 14px 0 0;
  background: linear-gradient(172deg, rgba(38, 178, 250, 0) 35%, rgba(36, 190, 252, .8) 130%), linear-gradient(90deg, #3a82ae, #2f8fca 30%, #2f9be0 60%, #2aa6f8 85%, #26adf8);
  display: flex;
  padding-left: 8px;
}
.app { position: relative; width: 112px; display: flex; justify-content: center; padding-top: 16px; flex: none; }
.app svg { width: 96px; height: 96px; overflow: visible; filter: drop-shadow(0 2px 2px rgba(0, 0, 0, .3)); }
.wide-app { width: 116px; }
.sub-app { width: 114px; }
.on::after {
  content: "";
  position: absolute;
  bottom: 4px;
  width: 8px; height: 8px;
  border-radius: 50%;
  background: #04286b;
}
.divider { width: 48px; flex: none; background: linear-gradient(#0a6bb3, #0a6bb3) 22px 18px / 2px 100px no-repeat; }
.second { width: 50px; background-position-x: 24px; }
.count {
  position: absolute;
  left: 72px; top: 13px;
  width: 38px; height: 38px;
  border-radius: 50%;
  background: #f94b48;
  color: #fff;
  font-size: 22px;
  line-height: 38px;
  text-align: center;
}
.glyph { font-family: "Open Sans", sans-serif; font-weight: 700; fill: #fff; text-anchor: middle; }
.cal { font-family: Roboto, sans-serif; font-weight: 300; text-anchor: middle; }
.jul { font-weight: 400; }
.book { font-family: "Liberation Serif", serif; fill: #f3dfe0; text-anchor: middle; }
```
